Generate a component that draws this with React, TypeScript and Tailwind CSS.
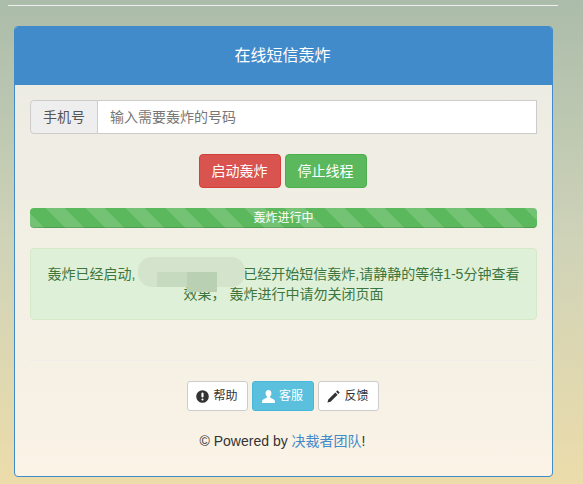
import React from "react";

const font = { fontFamily: '"Liberation Sans", "Noto Sans CJK SC", sans-serif' };

const App = () => {
  return (
    <div
      style={font}
      className="h-[484px] w-full overflow-hidden bg-gradient-to-b from-[#abbcaa] via-[#cfd3b8] to-[#ecdcaa] text-[14px] text-[#333]"
    >
      <div className="mx-2 mt-[5px] h-px w-[550px] bg-[#eeeeee]" />

      {/* panel */}
      <div className="ml-[14px] mt-5 h-[451px] w-[539px] overflow-hidden rounded-[4px] border border-[#428bca] bg-gradient-to-b from-[#ebebe3] to-[#faf3e6]">
        <div className="flex h-[58px] items-center justify-center pr-[2px] bg-[#428bca] text-[16px] text-white">
          在线短信轰炸
        </div>

        <div className="px-[15px] pt-[15px]">
          {/* phone input */}
          <div className="flex h-[34px] w-[507px]">
            <span className="flex w-[68px] items-center justify-center rounded-l-[4px] border border-[#cccccc] bg-[#eeeeee] text-[#555]">
              手机号
            </span>
            <input
              placeholder="输入需要轰炸的号码"
              className="min-w-0 flex-1 border border-l-0 border-[#cccccc] bg-white px-3 text-[14px] text-[#555] outline-none placeholder:text-[#777]"
            />
          </div>

          <div className="mt-5 flex justify-center gap-1 pr-[2px]">
            <button className="h-[34px] w-[82px] rounded-[4px] border border-[#d43f3a] bg-[#d9534f] text-white">启动轰炸</button>
            <button className="h-[34px] w-[82px] rounded-[4px] border border-[#4cae4c] bg-[#5cb85c] text-white">停止线程</button>
          </div>

          {/* progress bar */}
          <div className="mt-5 flex h-5 w-[507px] items-center justify-center rounded-[4px] bg-[#5cb85c] bg-[repeating-linear-gradient(45deg,#74c374_0,#74c374_10.6px,#5cb85c_10.6px,#5cb85c_24.75px,#74c374_24.75px,#74c374_28.284px)] text-[12px] text-white shadow-[inset_0_-1px_0_rgba(0,0,0,0.15)]">
            轰炸进行中
          </div>

          {/* alert */}
          <div className="relative mt-5 h-[72px] w-[507px] rounded-[4px] border border-[#d6e9c6] bg-[#dff0d8] px-[15px] py-[15px] text-center leading-[20px] text-[#3c763d]">
            轰炸已经启动, .<span className="inline-block w-[100px]" />已经开始短信轰炸,请静静的等待1-5分钟查看效果， 轰炸进行中请勿关闭页面
            {/* blurred-out number */}
            <div className="absolute left-[107px] top-[8px] h-[30px] w-[107px] rounded-[14px] bg-[#d3e3cc]" />
            <div className="absolute left-[126px] top-[23px] h-[15px] w-[60px] bg-[#c5dabe]" />
            <div className="absolute left-[156px] top-[23px] h-[20px] w-[30px] bg-[#b9d0b3]" />
          </div>

          <div className="mt-10 h-px w-[507px] bg-[#f0ede8]" />

          {/* small buttons */}
          <div className="mt-5 flex justify-center gap-1 pr-[2px]">
            <button className="flex h-[30px] w-[61px] items-center justify-center gap-1 rounded-[3px] border border-[#cccccc] bg-white text-[12px] text-[#333]">
              <svg viewBox="0 0 12 12" className="h-[13px] w-[13px]">
                <circle cx="6" cy="6" r="5.8" fill="#333" />
                <rect x="5" y="2.4" width="2" height="4.6" rx="1" fill="#fff" />
                <circle cx="6" cy="8.8" r="1" fill="#fff" />
              </svg>
              帮助
            </button>
            <button className="flex h-[30px] w-[62px] items-center justify-center gap-1 rounded-[3px] border border-[#46b8da] bg-[#5bc0de] text-[12px] text-white">
              <svg viewBox="0 0 12 12" className="h-[13px] w-[13px]" fill="#fff">
                <path d="M6 0C4.3 0 3.3 1.3 3.3 3c0 1.2.5 2.3 1.2 3 .2.6 0 1-.6 1.3C2.4 8 .6 8.6.2 9.8L0 12h12l-.2-2.2c-.4-1.2-2.2-1.8-3.7-2.5-.6-.3-.8-.7-.6-1.3.7-.7 1.2-1.8 1.2-3C8.7 1.3 7.7 0 6 0z" />
              </svg>
              客服
            </button>
            <button className="flex h-[30px] w-[61px] items-center justify-center gap-1 rounded-[3px] border border-[#cccccc] bg-white text-[12px] text-[#333]">
              <svg viewBox="0 0 12 12" className="h-[13px] w-[13px]" fill="#333">
                <path d="M9.6.3l2.1 2.1-1.2 1.2-2.1-2.1zM7.7 2.2l2.1 2.1-6.5 6.5L.4 11.6l.8-2.9z" />
              </svg>
              反馈
            </button>
          </div>

          <p className="mt-5 pr-[2px] text-center leading-[20px]">
            © Powered by <a className="text-[#428bca]">决裁者团队</a>!
          </p>
        </div>
      </div>
    </div>
  );
};

export default App;
